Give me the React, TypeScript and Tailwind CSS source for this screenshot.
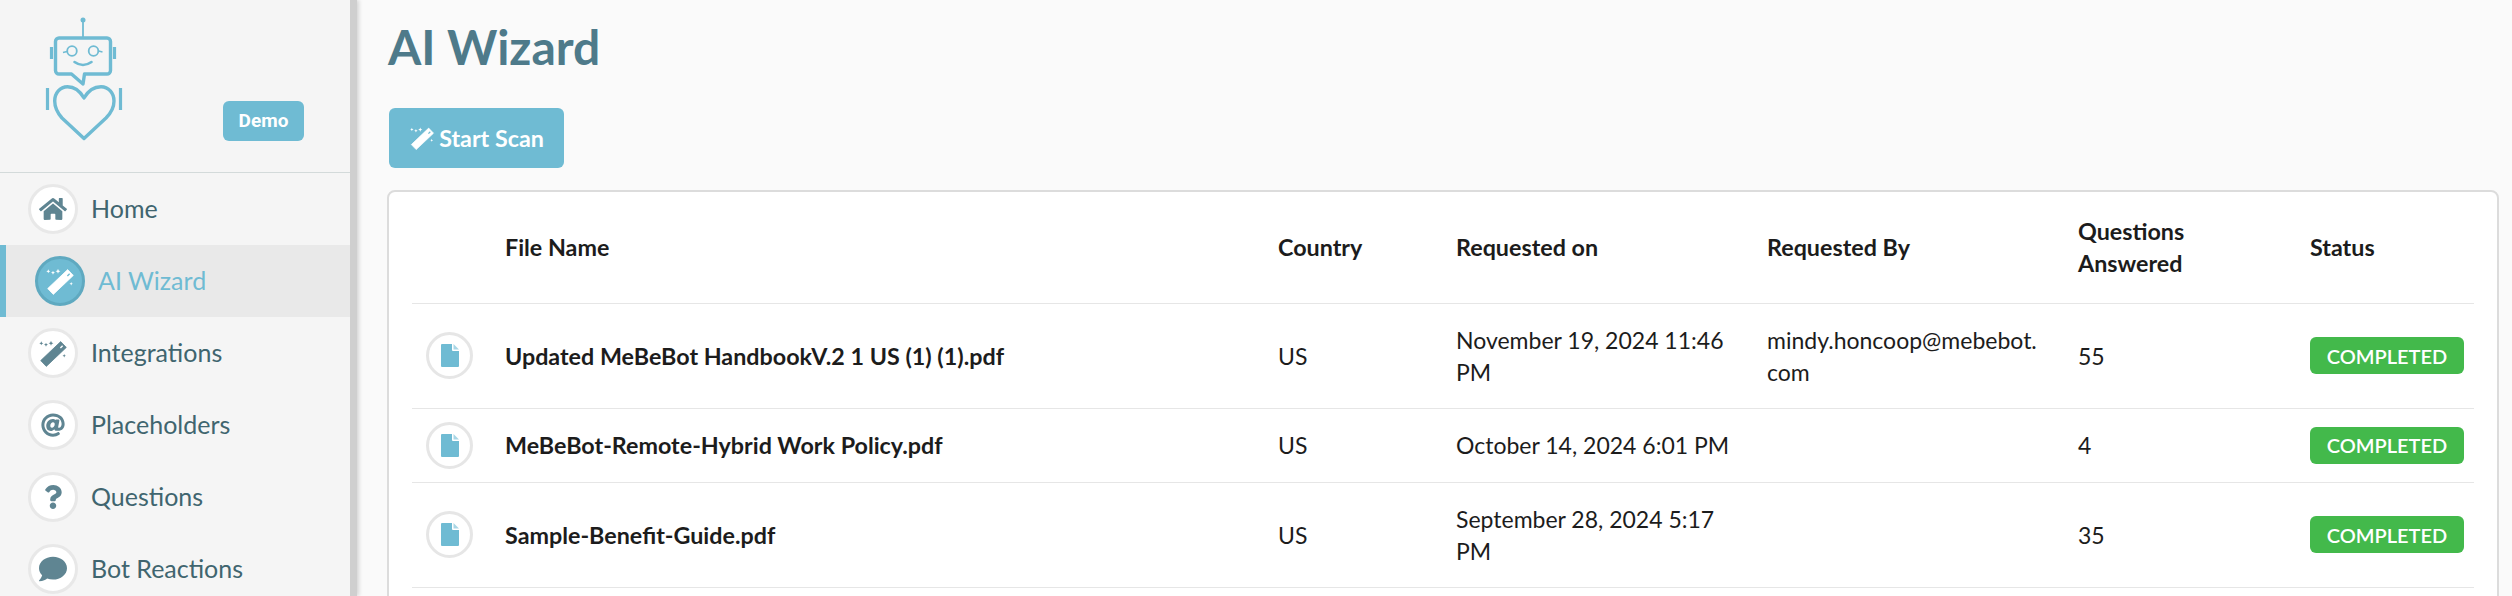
import { FaAt, FaComment, FaHome, FaQuestion } from 'react-icons/fa';

function WandIcon({ className }: { className?: string }) {
  return (
    <svg viewBox="0 0 30 30" className={className} fill="currentColor">
      <path d="M2.700 22.600 22.700 3.600l5.600 5.800-20 19Z" stroke="currentColor" strokeWidth="0.800" strokeLinejoin="round" />
      <path d="m21.900 9.400 2.200-2.100 1 1-2.200 2.100Z" fill="var(--cut, #fff)" />
      <path d="M3.300 3.300l.6 1.400 1.400.6-1.400.6-.6 1.400-.6-1.400-1.400-.6 1.400-.6ZM8 4.700l.6 1.400 1.400.6-1.400.6-.6 1.400-.6-1.400-1.400-.6 1.400-.6ZM13 2.800l.7 1.700 1.700.8-1.700.7-.7 1.700-.7-1.700-1.700-.7 1.700-.8ZM26.200 16l.5 1.200 1.200.5-1.200.5-.5 1.200-.5-1.200-1.200-.5 1.200-.5Z" />
    </svg>
  );
}

function BotLogo() {
  return (
    <svg viewBox="0 0 170 150" className="h-[150px] w-[170px]" fill="none" stroke="#6fbbd3">
      <circle cx="83" cy="20" r="2.500" fill="#6fbbd3" stroke="none" />
      <path d="M83 20v17" strokeWidth="1.800" />
      <path d="M59 38h48a3.500 3.500 0 0 1 3.500 3.500v29a3.500 3.500 0 0 1-3.500 3.500H84.500L83 84 71.500 74H59a3.500 3.500 0 0 1-3.500-3.500v-29A3.500 3.500 0 0 1 59 38Z" strokeWidth="3.400" strokeLinejoin="round" />
      <path d="M51.500 47v12M114.500 47v12" strokeWidth="3.200" />
      <circle cx="72" cy="51" r="4.800" strokeWidth="1.800" />
      <circle cx="93.500" cy="51" r="4.800" strokeWidth="1.800" />
      <path d="M63 52.500l4-1M98.500 51l4 1" strokeWidth="1.500" />
      <path d="M74.500 62q8.500 6 17 0" strokeWidth="2.600" strokeLinecap="round" />
      <path d="M84 98C80 91 74 86.700 67.500 86.700 60 86.700 54.700 93 54.700 101c0 7 3.300 12.500 7.300 17l22 20.500L106 118c4.500-4.500 8-10 8-17 0-8-5.500-14.300-13-14.300C94 86.700 88 91 84 98Z" strokeWidth="3.400" strokeLinejoin="round" />
      <path d="M47.500 88v22M120.500 88v22" strokeWidth="3.200" />
    </svg>
  );
}

const navItems = [
  { label: 'Home', icon: <FaHome className="h-7 w-7" /> },
  { label: 'AI Wizard', active: true, icon: <WandIcon className="h-[30px] w-[30px]" /> },
  { label: 'Integrations', icon: <WandIcon className="h-[30px] w-[30px]" /> },
  { label: 'Placeholders', icon: <FaAt className="h-6 w-6" /> },
  { label: 'Questions', icon: <FaQuestion className="h-6 w-6" /> },
  { label: 'Bot Reactions', icon: <FaComment className="h-7 w-7" /> },
];

const scans = [
  {
    name: 'Updated MeBeBot HandbookV.2 1 US (1) (1).pdf',
    requestedOn: 'November 19, 2024 11:46 PM',
    requestedBy: 'mindy.honcoop@mebebot.com',
    answered: 55,
  },
  { name: 'MeBeBot-Remote-Hybrid Work Policy.pdf', requestedOn: 'October 14, 2024 6:01 PM', requestedBy: '', answered: 4 },
  { name: 'Sample-Benefit-Guide.pdf', requestedOn: 'September 28, 2024 5:17 PM', requestedBy: '', answered: 35 },
];

function FileIcon() {
  return (
    <svg viewBox="0 0 18 23" className="h-[23px] w-[18px]">
      <path d="M0 1a1 1 0 0 1 1-1h10v6a1 1 0 0 0 1 1h6v15a1 1 0 0 1-1 1H1a1 1 0 0 1-1-1Z" fill="#6fbbd3" />
      <path d="M12.500 0 18 5.500h-5.500Z" fill="#a9d6e5" />
    </svg>
  );
}

export default function App() {
  return (
    <div className="flex h-[596px] overflow-hidden bg-[#fafafa] font-['Lato',sans-serif]">
      <aside className="w-[357px] shrink-0 border-r-[7px] border-[#cfcfcf] bg-[#f5f5f5] shadow-[2px_0_4px_rgba(0,0,0,0.15)]">
        <div className="relative h-[173px] border-b border-[#d3dada]">
          <BotLogo />
          <span className="absolute left-[223px] top-[101px] flex h-10 w-[81px] items-center justify-center rounded-md bg-[#6fbbd3] font-['Roboto',sans-serif] text-[19px] font-bold text-white">
            Demo
          </span>
        </div>
        <nav>
          {navItems.map((item) => (
            <div
              key={item.label}
              className={
                item.active
                  ? 'flex h-[72px] items-center gap-[13px] border-l-[6px] border-[#6fbbd3] bg-[#e9e9e9] pl-[29px] text-[#6fbbd3]'
                  : 'flex h-[72px] items-center gap-[13px] pl-[28px] text-[#40656f]'
              }
            >
              <span
                className={
                  item.active
                    ? 'flex h-[50px] w-[50px] items-center justify-center rounded-full border-[3px] border-[#5fa9c0] bg-[#6fbbd3] text-white [--cut:#6fbbd3]'
                    : 'flex h-[50px] w-[50px] items-center justify-center rounded-full border-[3px] border-[#e8e8e8] bg-white text-[#5f8592]'
                }
              >
                {item.icon}
              </span>
              <span className="pb-0.5 text-[25px] leading-8">{item.label}</span>
            </div>
          ))}
        </nav>
      </aside>

      <main className="min-w-0 flex-1 pl-[30px] pr-[13px]">
        <h1 className="pt-[21px] pl-px text-[48px] leading-[52px] font-bold text-[#4e7a8a]">AI Wizard</h1>
        <button className="mt-[35px] ml-0.5 flex h-[60px] w-[175px] items-center justify-center gap-1 rounded-md bg-[#6fbbd3] text-[23.300px] font-bold text-white [--cut:#6fbbd3]">
          <WandIcon className="h-[26px] w-[26px]" />
          Start Scan
        </button>
        <div className="mt-[22px] rounded-lg border-2 border-[#dcdcdc] bg-white px-[23px] pb-[100px]">
          <table className="w-full table-fixed border-collapse text-[23px] leading-8 text-[#1c1c1c]">
            <colgroup>
              <col className="w-[77px]" />
              <col className="w-[773px]" />
              <col className="w-[178px]" />
              <col className="w-[311px]" />
              <col className="w-[311px]" />
              <col className="w-[232px]" />
              <col />
            </colgroup>
            <thead>
              <tr className="h-[111px] border-b border-[#e6e6e6] text-left text-[23.300px]">
                <th />
                <th className="px-4 font-bold">File Name</th>
                <th className="px-4 font-bold">Country</th>
                <th className="px-4 font-bold">Requested on</th>
                <th className="px-4 font-bold">Requested By</th>
                <th className="px-4 font-bold">Questions Answered</th>
                <th className="px-4 font-bold">Status</th>
              </tr>
            </thead>
            <tbody>
              {scans.map((scan) => (
                <tr key={scan.name} className="border-b border-[#e6e6e6]">
                  <td className="py-[13px] pl-[14px]">
                    <span className="flex h-[47px] w-[47px] items-center justify-center rounded-full border-[3px] border-[#e6e6e6]">
                      <FileIcon />
                    </span>
                  </td>
                  <td className="px-4 py-5 text-[23.300px] font-bold">{scan.name}</td>
                  <td className="px-4 py-5">US</td>
                  <td className="px-4 py-5">{scan.requestedOn}</td>
                  <td className="px-4 py-5 break-words">{scan.requestedBy}</td>
                  <td className="px-4 py-5">{scan.answered}</td>
                  <td className="px-4">
                    <span className="flex h-[37px] w-[154px] items-center justify-center rounded-md bg-[#43b94b] text-[20px] font-semibold text-white">
                      COMPLETED
                    </span>
                  </td>
                </tr>
              ))}
            </tbody>
          </table>
        </div>
      </main>
    </div>
  );
}
